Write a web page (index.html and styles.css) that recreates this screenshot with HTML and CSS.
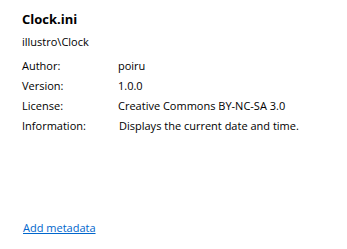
FILE: index.html
```html
<!DOCTYPE html>
<html lang="en">
<head>
    <meta charset="UTF-8">
    <title>Clock.ini</title>
    <link rel="stylesheet" href="styles.css">
</head>
<body>
    <div class="panel">
        <h1 class="skin-name">Clock.ini</h1>
        <div class="skin-path">illustro\Clock</div>
        <div class="meta">
            <span class="meta-label">Author:</span>
            <span class="meta-value">poiru</span>
            <span class="meta-label">Version:</span>
            <span class="meta-value">1.0.0</span>
            <span class="meta-label">License:</span>
            <span class="meta-value">Creative Commons BY-NC-SA 3.0</span>
            <span class="meta-label">Information:</span>
            <span class="meta-value info">Displays the current date and time.</span>
        </div>
        <a class="add-link" href="#">Add metadata</a>
    </div>
</body>
</html>
```

FILE: styles.css
```css
body {
    margin: 0;
    background-color: #FFFFFF;
    font-family: 'Open Sans', sans-serif;
    font-size: 11px;
    color: #000000;
}

.panel {
    display: flex;
    flex-direction: column;
    align-items: flex-start;
    padding: 9px 0 0 22px;
    height: 240px;
    box-sizing: border-box;
}

.skin-name {
    margin: 0;
    font-size: 13px;
    font-weight: bold;
    line-height: 20px;
}

.skin-path {
    margin-top: 3px;
    line-height: 20px;
}

.meta {
    display: grid;
    grid-template-columns: 96px auto;
    grid-auto-rows: 20px;
    line-height: 20px;
    margin-top: 4px;
}

.meta-value.info {
    padding-left: 1px;
}

.add-link {
    margin-top: auto;
    margin-bottom: 2px;
    margin-left: 1px;
    color: #0066CC;
    line-height: 20px;
}
```
